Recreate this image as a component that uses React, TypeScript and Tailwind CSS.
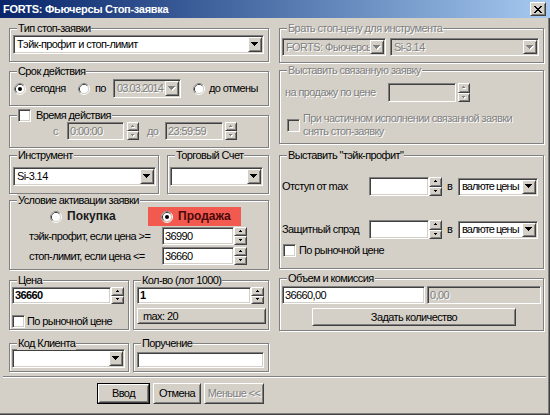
import React from "react";

const sunken =
  "border border-t-[#808080] border-l-[#808080] border-b-white border-r-white shadow-[inset_1px_1px_0_#404040,inset_-1px_-1px_0_#d4d0c8]";
const raised =
  "border border-t-white border-l-white border-b-[#404040] border-r-[#404040] shadow-[inset_1px_1px_0_#d4d0c8,inset_-1px_-1px_0_#808080]";
const dis = "text-[#808080] [text-shadow:1px_1px_0_#fff]";

function Tri({ dir = "down", disabled = false, small = false }: { dir?: "up" | "down"; disabled?: boolean; small?: boolean }) {
  const rows = small ? [3, 1] : [7, 5, 3, 1];
  const w = rows[0];
  const h = rows.length;
  const rects = (fill: string, off: number) =>
    rows.map((len, i) => {
      const y = dir === "down" ? i : h - 1 - i;
      return <rect key={fill + i} x={(w - len) / 2 + off} y={y + off} width={len} height={1} fill={fill} />;
    });
  return (
    <svg width={w + 1} height={h + 1} viewBox={`0 0 ${w + 1} ${h + 1}`} shapeRendering="crispEdges">
      {disabled && rects("#ffffff", 1)}
      {rects(disabled ? "#808080" : "#000000", 0)}
    </svg>
  );
}

function Combo({
  className = "",
  value = "",
  disabled = false,
  tight = false,
}: {
  className?: string;
  value?: string;
  disabled?: boolean;
  tight?: boolean;
}) {
  return (
    <div className={`${sunken} ${disabled ? "bg-[#d4d0c8]" : "bg-white"} flex p-px shrink-0 ${className}`}>
      <div
        className={`flex-1 min-w-0 flex items-center pl-[2px] overflow-hidden whitespace-nowrap ${tight ? "tracking-[-0.9px]" : ""} ${disabled ? dis : ""}`}
      >
        {value}
      </div>
      <div className={`${raised} bg-[#d4d0c8] w-[14px] shrink-0 flex items-center justify-center`}>
        <Tri disabled={disabled} />
      </div>
    </div>
  );
}

function Input({ className = "", value = "", disabled = false, bold = false }: { className?: string; value?: string; disabled?: boolean; bold?: boolean }) {
  return (
    <div
      className={`${sunken} ${disabled ? "bg-[#d4d0c8] " + dis : "bg-white"} ${bold ? "font-bold" : ""} flex items-center pl-[2px] overflow-hidden whitespace-nowrap shrink-0 ${className}`}
    >
      {value}
    </div>
  );
}

function Spin({ className = "", disabled = false }: { className?: string; disabled?: boolean }) {
  return (
    <div className={`flex flex-col shrink-0 ${className}`}>
      <div className={`${raised} bg-[#d4d0c8] flex-1 flex items-center justify-center`}>
        <Tri dir="up" small disabled={disabled} />
      </div>
      <div className={`${raised} bg-[#d4d0c8] flex-1 flex items-center justify-center`}>
        <Tri dir="down" small disabled={disabled} />
      </div>
    </div>
  );
}

function Radio({ checked = false }: { checked?: boolean }) {
  return (
    <svg width="12" height="12" viewBox="0 0 12 12" className="shrink-0">
      <circle cx="6" cy="6" r="5.5" fill="none" stroke="#ffffff" />
      <path d="M2.11 9.89 A5.5 5.5 0 0 1 9.89 2.11" fill="none" stroke="#808080" />
      <circle cx="6" cy="6" r="4.5" fill="none" stroke="#d4d0c8" />
      <path d="M2.82 9.18 A4.5 4.5 0 0 1 9.18 2.82" fill="none" stroke="#404040" />
      <circle cx="6" cy="6" r="4" fill="#ffffff" />
      {checked && <circle cx="6" cy="6" r="2" fill="#000000" />}
    </svg>
  );
}

function Checkbox({ disabled = false }: { disabled?: boolean }) {
  return <div className={`w-[13px] h-[13px] shrink-0 ${sunken} ${disabled ? "bg-[#d4d0c8]" : "bg-white"}`} />;
}

function Group({
  label,
  className = "",
  children,
  disabled = false,
}: {
  label: React.ReactNode;
  className?: string;
  children?: React.ReactNode;
  disabled?: boolean;
}) {
  return (
    <div className={`relative shrink-0 border border-[#808080] shadow-[1px_1px_0_#fff,inset_1px_1px_0_#fff] ${className}`}>
      <div className={`absolute -top-[7px] left-[7px] px-px bg-[#d4d0c8] leading-[13px] whitespace-nowrap ${disabled ? dis : ""}`}>
        {label}
      </div>
      {children}
    </div>
  );
}

function Btn({
  children,
  className = "",
  def = false,
  disabled = false,
}: {
  children: React.ReactNode;
  className?: string;
  def?: boolean;
  disabled?: boolean;
}) {
  if (def) {
    return (
      <div className={`border border-black shrink-0 ${className}`}>
        <div className={`${raised} bg-[#d4d0c8] w-full h-full flex items-center justify-center`}>{children}</div>
      </div>
    );
  }
  return (
    <div className={`${raised} bg-[#d4d0c8] flex items-center justify-center shrink-0 ${disabled ? dis : ""} ${className}`}>
      {children}
    </div>
  );
}

function CloseX() {
  const px: [number, number][] = [
    [0, 0], [1, 0], [6, 0], [7, 0],
    [1, 1], [2, 1], [5, 1], [6, 1],
    [2, 2], [3, 2], [4, 2], [5, 2],
    [3, 3], [4, 3],
    [2, 4], [3, 4], [4, 4], [5, 4],
    [1, 5], [2, 5], [5, 5], [6, 5],
    [0, 6], [1, 6], [6, 6], [7, 6],
  ];
  return (
    <svg width="8" height="7" viewBox="0 0 8 7" shapeRendering="crispEdges">
      {px.map(([x, y]) => (
        <rect key={`${x}-${y}`} x={x} y={y} width="1" height="1" fill="#000" />
      ))}
    </svg>
  );
}

export default function App() {
  return (
    <div className="w-[550px] h-[415px] bg-[#d4d0c8] relative overflow-hidden font-['Liberation_Sans',Arial,sans-serif] text-[11px] leading-[13px] tracking-[-0.6px] text-black shadow-[inset_-1px_-1px_0_#404040,inset_-2px_-2px_0_#808080]">
      {/* Title bar */}
      <div className="h-[18px] flex items-center bg-linear-to-r from-[#0a246a] to-[#a6caf0] pl-[3px]">
        <span className="text-white font-bold text-[11px] tracking-[-0.3px]">FORTS: Фьючерсы Стоп-заявка</span>
        <div className={`ml-auto mr-[4px] w-[16px] h-[14px] ${raised} bg-[#d4d0c8] flex items-center justify-center`}>
          <CloseX />
        </div>
      </div>

      {/* Columns */}
      <div className="flex h-[358px] pl-[9px]">
        {/* Left column */}
        <div className="w-[260px] flex flex-col">
          <Group label="Тип стоп-заявки" className="mt-[10px] h-[34px] pt-[6px] pl-[3px]">
            <Combo className="w-[251px] h-[19px]" value="Тэйк-профит и стоп-лимит" />
          </Group>

          <Group label="Срок действия" className="mt-[9px] h-[35px] pt-[7px] pl-[4px]">
            <div className="flex items-center h-[19px]">
              <div className="w-[64px] flex items-center gap-[4px]">
                <Radio checked />
                <span>сегодня</span>
              </div>
              <div className="w-[35px] flex items-center gap-[5px]">
                <Radio />
                <span>по</span>
              </div>
              <Combo className="w-[68px] h-[19px]" value="03.03.2014" disabled tight />
              <div className="ml-[12px] flex items-center gap-[4px]">
                <Radio />
                <span>до отмены</span>
              </div>
            </div>
          </Group>

          <Group
            label={
              <span className="flex items-center gap-[5px]">
                <Checkbox />
                <span>Время действия</span>
              </span>
            }
            className="mt-[9px] h-[33px] pt-[6px] pl-[43px]"
          >
            <div className="flex items-center h-[18px]">
              <span className={`w-[14px] ${dis}`}>с</span>
              <Input className="w-[57px] h-[18px]" value="0:00:00" disabled />
              <Spin className="ml-[3px] w-[12px] h-[18px]" disabled />
              <span className={`ml-[8px] w-[18px] ${dis}`}>до</span>
              <Input className="w-[58px] h-[18px]" value="23:59:59" disabled />
              <Spin className="ml-[2px] w-[12px] h-[18px]" disabled />
            </div>
          </Group>

          <div className="mt-[7px] flex h-[39px] shrink-0">
            <Group label="Инструмент" className="w-[150px] h-full pt-[11px] pl-[3px]">
              <Combo className="w-[143px] h-[19px]" value="Si-3.14" />
            </Group>
            <Group label="Торговый Счет" className="ml-[8px] w-[102px] h-full pt-[11px] pl-[2px]">
              <Combo className="w-[93px] h-[19px]" value="" />
            </Group>
          </div>

          <Group label="Условие активации заявки" className="mt-[6px] h-[70px] pt-[6px]">
            <div className="flex items-center h-[19px] pl-[40px]">
              <div className="w-[98px] flex items-center gap-[5px]">
                <Radio />
                <span className="font-bold text-[12px] text-[#1a1a1a] tracking-normal">Покупка</span>
              </div>
              <div className="w-[93px] h-[19px] bg-[#f25a50] flex items-center gap-[5px] pl-[13px]">
                <Radio checked />
                <span className="font-bold text-[12px] text-[#4a0808] tracking-normal">Продажа</span>
              </div>
            </div>
            <div className="flex items-center mt-[1px] pl-[19px]">
              <span className="w-[133px]">тэйк-профит, если цена &gt;=</span>
              <Input className="w-[72px] h-[18px]" value="36990" />
              <Spin className="w-[13px] h-[18px]" />
            </div>
            <div className="flex items-center mt-[2px] pl-[19px]">
              <span className="w-[133px]">стоп-лимит, если цена &lt;=</span>
              <Input className="w-[72px] h-[18px]" value="36660" />
              <Spin className="w-[13px] h-[18px]" />
            </div>
          </Group>

          <div className="mt-[10px] flex h-[50px] shrink-0">
            <Group label="Цена" className="w-[120px] h-full pt-[6px] pl-[2px]">
              <div className="flex">
                <Input className="w-[99px] h-[17px]" value="36660" bold />
                <Spin className="w-[13px] h-[17px]" />
              </div>
              <div className="mt-[11px] flex items-center gap-[2px]">
                <Checkbox />
                <span>По рыночной цене</span>
              </div>
            </Group>
            <Group label="Кол-во (лот 1000)" className="ml-[4px] w-[136px] h-full pt-[6px] pl-[3px]">
              <div className="flex">
                <Input className="w-[114px] h-[17px]" value="1" bold />
                <Spin className="w-[13px] h-[17px]" />
              </div>
              <div className={`mt-[4px] w-[129px] h-[16px] ${raised} bg-[#d4d0c8] flex items-center pl-[5px]`}>max: 20</div>
            </Group>
          </div>

          <div className="mt-[13px] flex h-[29px] shrink-0">
            <Group label="Код Клиента" className="w-[120px] h-full pt-[5px] pl-[2px]">
              <Combo className="w-[113px] h-[19px]" value="" />
            </Group>
            <Group label="Поручение" className="ml-[4px] w-[136px] h-full pt-[8px] pl-[3px]">
              <Input className="w-[127px] h-[16px]" value="" />
            </Group>
          </div>
        </div>

        {/* Right column */}
        <div className="ml-[10px] w-[265px] flex flex-col">
          <Group label="Брать стоп-цену для инструмента" disabled className="mt-[10px] h-[35px] pt-[9px] pl-[2px]">
            <div className="flex">
              <Combo className="w-[104px] h-[18px]" value="FORTS: Фьючерсы" disabled />
              <Combo className="ml-[4px] w-[149px] h-[18px]" value="Si-3.14" disabled />
            </div>
          </Group>

          <Group label="Выставить связанную заявку" disabled className="mt-[7px] h-[74px] pt-[12px] pl-[5px]">
            <div className="flex items-center">
              <span className={`w-[103px] ${dis}`}>на продажу по цене</span>
              <Input className="w-[68px] h-[19px]" value="" disabled />
              <Spin className="ml-[2px] w-[12px] h-[19px]" disabled />
            </div>
            <div className="mt-[10px] ml-[2px] flex items-center gap-[3px]">
              <Checkbox disabled />
              <div className={dis}>
                При частичном исполнении связанной заявки
                <br />
                снять стоп-заявку
              </div>
            </div>
          </Group>

          <Group label={'Выставить "тэйк-профит"'} className="mt-[11px] h-[114px] pt-[21px] pl-[2px]">
            <div className="flex items-center">
              <span className="w-[87px]">Отступ от max</span>
              <Input className="w-[60px] h-[19px]" value="" />
              <Spin className="w-[13px] h-[19px]" />
              <span className="ml-[5px] w-[11px]">в</span>
              <Combo className="w-[80px] h-[18px]" value="валюте цены" tight />
            </div>
            <div className="flex items-center mt-[24px]">
              <span className="w-[87px]">Защитный спрэд</span>
              <Input className="w-[60px] h-[19px]" value="" />
              <Spin className="w-[13px] h-[19px]" />
              <span className="ml-[5px] w-[11px]">в</span>
              <Combo className="w-[80px] h-[18px]" value="валюте цены" tight />
            </div>
            <div className="mt-[5px] ml-[1px] flex items-center gap-[3px]">
              <Checkbox />
              <span>По рыночной цене</span>
            </div>
          </Group>

          <Group label="Объем и комиссия" className="mt-[9px] h-[53px] pt-[7px] pl-[2px]">
            <div className="flex">
              <Input className="w-[143px] h-[18px]" value="36660,00" />
              <Input className="ml-[2px] w-[114px] h-[18px]" value="0,00" disabled />
            </div>
            <Btn className="mt-[4px] ml-[30px] w-[204px] h-[18px]">Задать количество</Btn>
          </Group>
        </div>
      </div>

      {/* Separator */}
      <div className="ml-[3px] mr-[4px] h-[2px] border-t border-t-[#808080] border-b border-b-white" />

      {/* Buttons */}
      <div className="flex pl-[97px] mt-[5px] gap-[3px]">
        <Btn def className="w-[53px] h-[21px]">
          Ввод
        </Btn>
        <Btn className="w-[48px] h-[21px]">Отмена</Btn>
        <Btn disabled className="w-[60px] h-[21px]">
          Меньше &lt;&lt;
        </Btn>
      </div>
    </div>
  );
}
